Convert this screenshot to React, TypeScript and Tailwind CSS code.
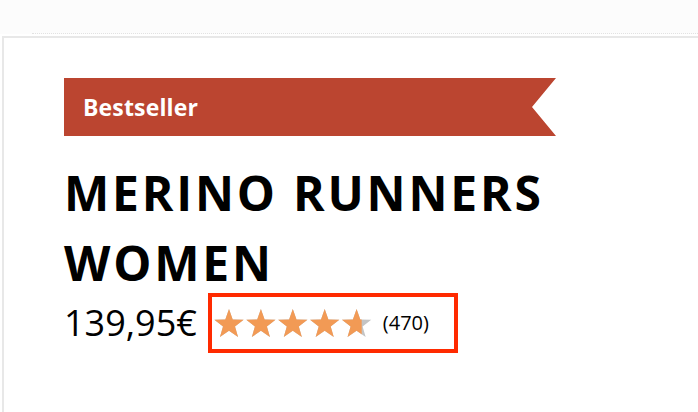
import React from "react";

const STAR_COLOR = "#f29a55";
const EMPTY_COLOR = "#c4c4c4";

function starPoints(cx: number, cy: number, R: number) {
  const r = R * 0.41;
  const pts: string[] = [];
  for (let i = 0; i < 10; i++) {
    const rad = i % 2 === 0 ? R : r;
    const a = (Math.PI / 5) * i - Math.PI / 2;
    pts.push(`${(cx + rad * Math.cos(a)).toFixed(2)},${(cy + rad * Math.sin(a)).toFixed(2)}`);
  }
  return pts.join(" ");
}

function Stars({ fill }: { fill: number }) {
  const R = 15.4;
  const pitch = 31.9;
  const w = 158;
  const h = 28;
  const centers = [0, 1, 2, 3, 4].map((i) => 15 + i * pitch);
  return (
    <svg width={w} height={h} viewBox={`0 0 ${w} ${h}`}>
      <defs>
        <clipPath id="filled">
          <rect x="0" y="0" width={fill} height={h} />
        </clipPath>
      </defs>
      {centers.map((cx, i) => (
        <polygon key={`e${i}`} points={starPoints(cx, R + 0.1, R)} fill={EMPTY_COLOR} />
      ))}
      <g clipPath="url(#filled)">
        {centers.map((cx, i) => (
          <polygon key={`f${i}`} points={starPoints(cx, R + 0.1, R)} fill={STAR_COLOR} />
        ))}
      </g>
    </svg>
  );
}

export default function App() {
  return (
    <div className="w-[698px] h-[412px] overflow-hidden bg-white font-['Open_Sans',sans-serif] text-black">
      {/* top strip */}
      <div className="h-[34px] bg-[#fcfcfc] flex items-end pl-[32px]">
        <div className="w-full border-b border-dotted border-[#e2e2e2]" />
      </div>

      <div className="mt-[2px] ml-[2px] h-[400px] border-l-2 border-t-2 border-[#e8e8e8] pl-[60px] pt-[40px]">
        <div className="w-[492px] h-[58px] bg-[#bb4530] flex items-center pl-[19px] [clip-path:polygon(0_0,492px_0,468px_50%,492px_100%,0_100%)]">
          <span className="text-white text-[23px] font-bold tracking-[0.15px] leading-none">Bestseller</span>
        </div>

        <h1 className="mt-[22px] text-[48px] leading-[70px] font-bold tracking-[2.8px] uppercase">
          Merino Runners
          <br />
          Women
        </h1>

        <div className="-mt-[5px] flex items-center gap-[11px]">
          <span className="text-[36px] leading-none">139,95€</span>
          <div className="h-[60px] border-4 border-[#ff2a00] flex items-center pl-[2px] pr-[25px] gap-[11px]">
            <Stars fill={147.7} />
            <span className="text-[20px] leading-none">(470)</span>
          </div>
        </div>
      </div>
    </div>
  );
}
